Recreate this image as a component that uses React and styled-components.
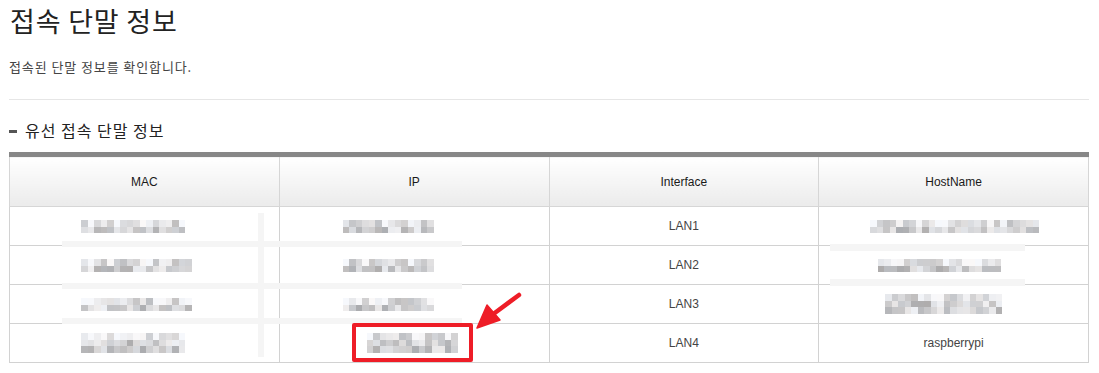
import React from "react";
import styled, { createGlobalStyle } from "styled-components";

const Global = createGlobalStyle`
  html, body { margin: 0; padding: 0; background: #fff; }
  body { font-family: "Noto Sans CJK KR", "Noto Sans", sans-serif; color: #222; }
`;

const Page = styled.div`
  width: 1099px;
  padding: 0 10px 0 9px;
  box-sizing: border-box;
`;

const Title = styled.h1`
  margin: 0;
  padding: 1px 0 0 1px;
  font-size: 27px;
  font-weight: 400;
  letter-spacing: 0.8px;
  line-height: 40px;
  color: #222;
`;

const Desc = styled.p`
  margin: 17px 0 0 0;
  font-size: 13px;
  letter-spacing: 0.9px;
  line-height: 18px;
  color: #444;
`;

const Divider = styled.hr`
  margin: 23px 0 0 0;
  border: 0;
  border-top: 1px solid #e6e6e6;
`;

const SectionTitle = styled.h2`
  margin: 19px 0 0 0;
  display: flex;
  align-items: center;
  gap: 8px;
  font-size: 16px;
  font-weight: 400;
  letter-spacing: 1px;
  line-height: 22px;
  color: #222;
  &::before {
    content: "";
    width: 8px;
    height: 3px;
    background: #555;
    margin-top: 2px;
  }
`;

const TableWrap = styled.div`
  position: relative;
  margin-top: 11px;
  width: 1080px;
`;

const Table = styled.table`
  width: 100%;
  border-collapse: collapse;
  table-layout: fixed;
  border-top: 5px solid #878787;
  font-family: "Liberation Sans", Arial, sans-serif;
  font-size: 12px;
`;

const Th = styled.th`
  height: 49px;
  padding: 0;
  font-weight: 400;
  color: #1a1a1a;
  background: linear-gradient(#ffffff, #ebebeb);
  border: 1px solid #d6d6d6;
  border-top: 0;
`;

const Td = styled.td`
  height: 38px;
  padding: 0;
  text-align: center;
  color: #444;
  border: 1px solid #d2d2d2;
`;

const Mosaic = styled.div`
  display: inline-grid;
  grid-template-columns: repeat(${(p) => p.$cols}, 6.5px);
  grid-auto-rows: 6.5px;
  vertical-align: middle;
  transform: translateX(${(p) => p.$shift || 0}px);
`;

const Pix = styled.span`
  display: block;
`;

const Smudge = styled.div`
  position: absolute;
  background: #f5f5f5;
  pointer-events: none;
`;

const Highlight = styled.div`
  position: absolute;
  left: 343px;
  top: 171px;
  width: 121px;
  height: 39px;
  box-sizing: border-box;
  border: 4px solid #ee1d27;
  border-radius: 2px;
  pointer-events: none;
`;

const Arrow = styled.svg`
  position: absolute;
  left: 455px;
  top: 136px;
  overflow: visible;
  pointer-events: none;
`;

// deterministic grey shades for the pixelated (redacted) values
function shades(seed, count, cols) {
  const out = [];
  let s = seed * 9301 + 49297;
  for (let i = 0; i < count; i++) {
    s = (s * 9301 + 49297) % 233280;
    const r = s / 233280;
    const row = Math.floor(i / cols);
    const light = row === 0 ? 18 : 0;
    const base = Math.min(248, 172 + light + Math.floor(r * 70));
    const tint = (i % 5) - 2;
    out.push(`rgb(${base + tint}, ${base}, ${base - tint + 2})`);
  }
  return out;
}

function Redacted({ cols, rows, seed, shift }) {
  const list = shades(seed, cols * rows, cols);
  return (
    <Mosaic $cols={cols} $shift={shift}>
      {list.map((c, i) => (
        <Pix key={i} style={{ background: c }} />
      ))}
    </Mosaic>
  );
}

const rows = [
  { mac: [16, 2, 3, -11], ip: [14, 2, 7, -26], iface: "LAN1", host: [26, 2, 11, 1] },
  { mac: [17, 2, 13, -8], ip: [14, 2, 17, -26], iface: "LAN2", host: [19, 2, 19, -14] },
  { mac: [17, 2, 23, -8], ip: [14, 2, 29, -26], iface: "LAN3", host: [18, 3, 31, -10] },
  { mac: [16, 3, 37, -11], ip: [14, 3, 41, -2], iface: "LAN4", host: "raspberrypi" },
];

const r = (a) => <Redacted cols={a[0]} rows={a[1]} seed={a[2]} shift={a[3]} />;

export default function App() {
  return (
    <>
      <Global />
      <Page>
        <Title>접속 단말 정보</Title>
        <Desc>접속된 단말 정보를 확인합니다.</Desc>
        <Divider />
        <SectionTitle>유선 접속 단말 정보</SectionTitle>
        <TableWrap>
          <Table>
            <thead>
              <tr>
                <Th>MAC</Th>
                <Th>IP</Th>
                <Th>Interface</Th>
                <Th>HostName</Th>
              </tr>
            </thead>
            <tbody>
              {rows.map((row) => (
                <tr key={row.iface}>
                  <Td>{r(row.mac)}</Td>
                  <Td>{r(row.ip)}</Td>
                  <Td>{row.iface}</Td>
                  <Td>{typeof row.host === "string" ? row.host : r(row.host)}</Td>
                </tr>
              ))}
            </tbody>
          </Table>
          <Smudge style={{ left: 53, top: 89, width: 400, height: 6 }} />
          <Smudge style={{ left: 53, top: 131, width: 400, height: 6 }} />
          <Smudge style={{ left: 53, top: 166, width: 400, height: 6 }} />
          <Smudge style={{ left: 249, top: 61, width: 6, height: 144 }} />
          <Smudge style={{ left: 821, top: 92, width: 195, height: 7 }} />
          <Smudge style={{ left: 821, top: 127, width: 195, height: 7 }} />
          <Highlight />
          <Arrow width="60" height="50" viewBox="0 0 60 50">
            <line x1="55" y1="7" x2="28" y2="27" stroke="#ee1d27" strokeWidth="4.5" strokeLinecap="round" />
            <polygon points="13,40 23,17 36,32" fill="#ee1d27" stroke="#ee1d27" strokeWidth="1.5" strokeLinejoin="round" />
          </Arrow>
        </TableWrap>
      </Page>
    </>
  );
}
